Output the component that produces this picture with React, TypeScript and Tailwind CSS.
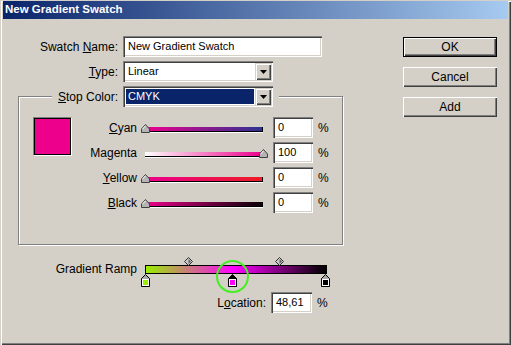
import React from 'react';

const sunken =
  'shadow-[inset_1px_1px_0_#808080,inset_2px_2px_0_#404040,inset_-1px_-1px_0_#ffffff,inset_-2px_-2px_0_#d4d0c8]';
const raised =
  'shadow-[inset_1px_1px_0_#ffffff,inset_-1px_-1px_0_#404040,inset_-2px_-2px_0_#808080]';

const DropButton = () => (
  <div
    className={`w-[16px] h-[17px] bg-[#d4d0c8] flex items-center justify-center shadow-[inset_1px_1px_0_#d4d0c8,inset_2px_2px_0_#ffffff,inset_-1px_-1px_0_#404040,inset_-2px_-2px_0_#808080]`}
  >
    <svg width="7" height="4" viewBox="0 0 7 4">
      <polygon points="0,0 7,0 3.5,4" fill="#000" />
    </svg>
  </div>
);

const Select = ({ value, highlight }: { value: string; highlight?: boolean }) => (
  <div className={`w-[150px] h-[21px] bg-white flex items-center p-[2px] ${sunken}`}>
    <div className="flex-1 h-full flex items-center px-[1px]">
      {highlight ? (
        <span className="w-full h-[15px] bg-[#0a246a] text-white flex items-center pl-[2px] text-[11px]">
          {value}
        </span>
      ) : (
        <span className="pl-[2px] text-[11px]">{value}</span>
      )}
    </div>
    <DropButton />
  </div>
);

const Field = ({ value, w }: { value: string; w: string }) => (
  <div className={`${w} h-[21px] bg-white flex items-center pl-[5px] text-[11px] ${sunken}`}>{value}</div>
);

const Thumb = ({ left }: { left: string }) => (
  <svg className={`absolute ${left} top-[-3px]`} width="9" height="9" viewBox="0 0 9 9">
    <polygon points="4.5,0.5 8.5,5 8.5,8.5 0.5,8.5 0.5,5" fill="#b4b4b4" stroke="#404040" />
    <line x1="1.5" y1="5.2" x2="4.5" y2="1.8" stroke="#ffffff" />
  </svg>
);

const sliders = [
  { label: 'Cyan', u: 0, grad: 'bg-[linear-gradient(to_right,#ec008c,#2e3192)]', thumb: 'left-[-4px]', value: '0' },
  { label: 'Magenta', u: 2, grad: 'bg-[linear-gradient(to_right,#ffffff,#ec008c)]', thumb: 'left-[114px]', value: '100' },
  { label: 'Yellow', u: 0, grad: 'bg-[linear-gradient(to_right,#ec008c,#ed1c24)]', thumb: 'left-[-4px]', value: '0' },
  { label: 'Black', u: 0, grad: 'bg-[linear-gradient(to_right,#ec008c,#0a0005)]', thumb: 'left-[-4px]', value: '0' },
];

const Accel = ({ text, u }: { text: string; u: number }) => (
  <>
    {text.slice(0, u)}
    <u>{text[u]}</u>
    {text.slice(u + 1)}
  </>
);

// colour stop under the ramp: small arrow head over a framed colour chip
const Stop = ({ left, color, selected }: { left: string; color: string; selected?: boolean }) => (
  <svg className={`absolute ${left} top-[9px]`} width="9" height="13" viewBox="0 0 9 13">
    <polygon points="4.5,0.5 8.5,4.5 8.5,12.5 0.5,12.5 0.5,4.5" fill={selected ? '#000' : '#a8a8a8'} stroke="#000" />
    <rect x="1" y="5" width="7" height="7" fill="#ffffff" />
    <rect x="2" y="6" width="5" height="5" fill={color} />
  </svg>
);

const Diamond = ({ left }: { left: string }) => (
  <svg className={`absolute ${left} top-[-8px]`} width="9" height="9" viewBox="0 0 9 9">
    <polygon points="4.5,0.5 8.5,4.5 4.5,8.5 0.5,4.5" fill="#c8c8c8" stroke="#303030" />
    <polygon points="4.5,2 7,4.5 4.5,7" fill="#606060" />
  </svg>
);

export default function App() {
  return (
    <div className="w-[511px] h-[345px] bg-[#d4d0c8] pt-[1px] px-[3px] text-black font-['Liberation_Sans',Arial,sans-serif] shadow-[inset_1px_1px_0_#d4d0c8,inset_2px_2px_0_#ffffff,inset_-1px_-1px_0_#404040,inset_-2px_-2px_0_#808080] overflow-hidden">
      {/* Title bar */}
      <div className="h-[18px] bg-[linear-gradient(to_right,#0a246a,#a6caf0)] flex items-center pl-[2px]">
        <span className="text-white font-bold text-[11.5px]">New Gradient Swatch</span>
      </div>

      <div className="flex">
        {/* Left part */}
        <div className="w-[345px] text-[12px]">
          <div className="flex items-center mt-[17px]">
            <span className="w-[115px] text-right">
              Swatch <Accel text="Name:" u={0} />
            </span>
            <div className="ml-[5px]">
              <Field value="New Gradient Swatch" w="w-[199px]" />
            </div>
          </div>

          <div className="flex items-center mt-[4px]">
            <span className="w-[115px] text-right">
              <Accel text="Type:" u={0} />
            </span>
            <div className="ml-[5px]">
              <Select value="Linear" />
            </div>
          </div>

          <fieldset className="mt-[4px] ml-[15px] w-[325px] border border-[#808080] shadow-[inset_1px_1px_0_#ffffff,1px_1px_0_#ffffff]">
            <legend className="ml-[33px] bg-[#d4d0c8]">
              <div className="flex items-center px-[6px]">
                <span className="w-[60px] text-right whitespace-nowrap">
                  <Accel text="Stop Color:" u={0} />
                </span>
                <div className="ml-[5px]">
                  <Select value="CMYK" highlight />
                </div>
              </div>
            </legend>

            <div className="flex pt-[10px] pl-[14px] pb-[31px]">
              <div className="w-[39px] h-[39px] border border-t-[#808080] border-l-[#808080] border-b-white border-r-white">
                <div className="w-full h-full border border-black bg-[#ec008c]" />
              </div>

              <div className="flex flex-col gap-[4px]">
                {sliders.map((s) => (
                  <div key={s.label} className="flex items-center h-[21px]">
                    <span className="w-[65px] text-right">
                      <Accel text={s.label} u={s.u} />
                    </span>
                    <div className="relative ml-[8px] w-[118px] mt-[4px]">
                      <div className={`h-[5px] border-b border-r border-black shadow-[0_1px_0_#ffffff] ${s.grad}`} />
                      <Thumb left={s.thumb} />
                    </div>
                    <div className="ml-[10px]">
                      <Field value={s.value} w="w-[40px]" />
                    </div>
                    <span className="ml-[5px]">%</span>
                  </div>
                ))}
              </div>
            </div>
          </fieldset>

          {/* Gradient ramp */}
          <div className="flex items-center mt-[15px]">
            <span className="w-[134px] text-right">Gradient Ramp</span>
            <div className="relative ml-[8px] w-[182px] h-[9px]">
              <div className="h-full border border-black bg-[linear-gradient(to_right,#99ee00_0%,#ff00ff_48.61%,#000000_100%)]" />
              <Diamond left="left-[39px]" />
              <Diamond left="left-[130px]" />
              <Stop left="left-[-4px]" color="#99ee00" />
              <Stop left="left-[83px]" color="#ff00ff" selected />
              <Stop left="left-[176px]" color="#000000" />
              <div className="absolute left-[71px] top-[-5px] w-[33px] h-[33px] rounded-full border-2 border-[#44ee22]" />
            </div>
          </div>

          <div className="flex items-center mt-[14px]">
            <span className="w-[263px] text-right">
              L<Accel text="ocation:" u={0} />
            </span>
            <div className="ml-[5px]">
              <Field value="48,61" w="w-[41px]" />
            </div>
            <span className="ml-[5px]">%</span>
          </div>
        </div>

        {/* Buttons */}
        <div className="ml-[55px] mt-[18px] flex flex-col gap-[10px] text-[12px]">
          <div className="w-[94px] h-[20px] border border-black">
            <div className={`w-full h-full bg-[#d4d0c8] flex items-center justify-center ${raised}`}>OK</div>
          </div>
          <div className={`w-[94px] h-[20px] bg-[#d4d0c8] flex items-center justify-center ${raised}`}>Cancel</div>
          <div className={`w-[94px] h-[20px] bg-[#d4d0c8] flex items-center justify-center ${raised}`}>Add</div>
        </div>
      </div>
    </div>
  );
}
